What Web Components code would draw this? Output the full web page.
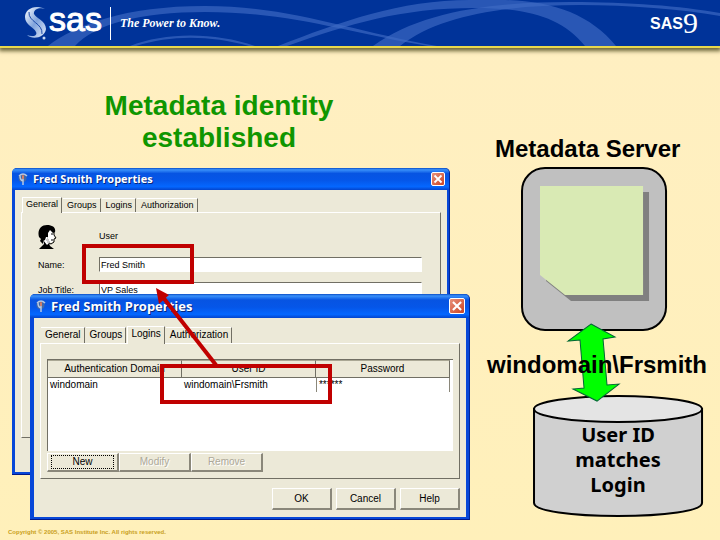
<!DOCTYPE html>
<html lang="en">
<head>
<meta charset="utf-8">
<title>Metadata identity established</title>
<style>
html, body { margin: 0; min-height: 100%; }
body { background: linear-gradient(#ffefc2, #fff0ba); font-family: "Liberation Sans", Arial, sans-serif; color: #000; }
</style>
</head>
<body>
<metadata-slide></metadata-slide>

<script>
const define = (name, html, setup) => {
  const tpl = document.createElement('template');
  tpl.innerHTML = html;
  customElements.define(name, class extends HTMLElement {
    constructor() {
      super();
      this.attachShadow({ mode: 'open' }).append(tpl.content.cloneNode(true));
    }
    connectedCallback() { if (setup) setup(this, this.shadowRoot); }
  });
};

define('slide-header', `
<style>
:host { display: flex; align-items: center; position: relative; height: 46px; background: #003399; border-bottom: 2px solid #e8d84c; box-shadow: 0 2px 4px 1px #6b6438; color: #fff; padding: 0 22px 0 24px; }
.arcs { position: absolute; inset: 0; width: 100%; height: 100%; }
.mark { position: relative; width: 25px; height: 34px; }
.sas { position: relative; font-size: 34px; line-height: 34px; -webkit-text-stroke: 1px #fff; padding-bottom: 8px; }
.rule { position: relative; width: 1px; height: 33px; background: #fff; margin: 0 9px 0 8px; }
.tag { position: relative; font: italic bold 12px/16px "Liberation Serif", "Times New Roman", serif; flex: 1; }
.prod { position: relative; font: bold 16px/20px "Liberation Sans Narrow", "Liberation Sans", sans-serif; padding-top: 2px; }
.nine { position: relative; font: 30px/30px "Liberation Serif", serif; }
</style>
<svg class="arcs" viewBox="0 0 720 46" preserveAspectRatio="none" fill="#3f6cc4" fill-opacity=".65" aria-hidden="true">
<path d="M48 46C75 25 125 6 205 6C290 6 350 31 437 46H428C345 32 290 12 205 12C140 12 95 24 75 46Z"/>
<path d="M278 46C340 22 400 0 470 0H500C550 0 590 14 616 46H585C562 18 530 8 475 8C400 8 350 24 287 46Z"/>
<path d="M373 46C420 12 490 2 570 2C630 2 680 6 720 13V16C680 9 630 5 580 5C510 5 440 14 400 46Z"/>
<path d="M130 46C165 32 215 32 255 46H249C210 35 170 35 136 46Z"/>
</svg>
<svg class="mark" viewBox="0 0 25 34" aria-hidden="true">
<defs><linearGradient id="g" x1="0" y1="0" x2="1" y2="1"><stop offset="0" stop-color="#fff"/><stop offset=".5" stop-color="#7fa3dc"/><stop offset="1" stop-color="#e3ecfa"/></linearGradient></defs>
<path fill="url(#g)" d="M21 3C11-2 1 3 1 11C1 19 10 21 12 26C14 30 8 31 3 29C8 34 21 32 22 23C22 15 12 12 10 8C9 4 15 1 21 3Z"/>
<path fill="none" stroke="#1c4aa8" stroke-width="1" d="M5 6C4 16 19 17 18 28"/>
<circle cx="20" cy="32" r="1.5" fill="#c7d8f3"/>
</svg>
<span class="sas">sas</span>
<span class="rule"></span>
<span class="tag">The Power to Know.</span>
<span class="prod">SAS</span><span class="nine">9</span>
`);

define('dialog-window', `
<style>
:host { display: flex; flex-direction: column; box-sizing: border-box; border-radius: 5px 5px 0 0; background: #0747d8; border-right: 1px solid #00259a; border-bottom: 1px solid #00188a; }
header { display: flex; align-items: center; gap: 5px; height: var(--bar, 22px); padding: 0 4px 0 6px; border-radius: 5px 5px 0 0; background: linear-gradient(#0a4cc4, #3a91fa 8%, #0754e2 25%, #0556e8 55%, #0467ff 85%, #0344cc); color: #fff; }
h2 { flex: 1; margin: 0; font: bold var(--title, 11px)/16px "Open Sans", "Noto Sans", sans-serif; text-shadow: 1px 1px 0 #07267a; white-space: nowrap; }
header svg.ico { width: 10px; height: 12px; }
button { display: flex; padding: 0; border: 1px solid #fff; border-radius: 2px; background: linear-gradient(135deg, #e8927c, #cc4322); width: var(--close, 14px); height: var(--close, 14px); box-sizing: border-box; align-items: center; justify-content: center; }
button svg { width: 100%; height: 100%; }
.body { flex: 1; display: flex; flex-direction: column; background: #ece9d8; margin: 0 var(--edge-right, 2px) 2px var(--edge, 3px); padding: var(--pad, 7px 6px 34px); }
</style>
<header>
<svg class="ico" viewBox="0 0 10 12" aria-hidden="true"><circle cx="4.5" cy="5" r="4" fill="#4068a8"/><path d="M1 3Q5-1 9 3M5 3V12M2 3Q2 7 5 8" stroke="#b8c8e0" stroke-width="1.5" fill="none"/><path d="M5 2V6" stroke="#e0704c" stroke-width="1.5"/></svg>
<h2></h2>
<button type="button" aria-label="Close"><svg viewBox="0 0 12 12"><path d="M2.500 2.500L9.500 9.500M9.500 2.500L2.500 9.500" stroke="#fff" stroke-width="1.800"/></svg></button>
</header>
<div class="body"><slot></slot></div>
`, (el, root) => { root.querySelector('h2').textContent = el.getAttribute('heading'); });

define('tab-strip', `
<style>
:host { display: flex; align-items: flex-end; gap: 1px; padding-left: 1px; }
button { font: var(--ui, 9px)/12px "Liberation Sans", Arial, sans-serif; margin: 0; padding: 0 3px 1px 4px; height: var(--tab, 14px); border: 0; border-top: 1px solid #fff; border-right: 1px solid #716f64; background: #ece9d8; color: #000; }
button.on { height: calc(var(--tab, 14px) + 2px); padding: 0 3px 3px; margin-bottom: -1px; position: relative; border-left: 1px solid #fff; }
</style>
`, (el, root) => {
  el.setAttribute('role', 'tablist');
  ['General', 'Groups', 'Logins', 'Authorization'].forEach(name => {
    const b = document.createElement('button');
    b.type = 'button';
    b.textContent = name;
    b.setAttribute('role', 'tab');
    b.setAttribute('aria-selected', name === el.getAttribute('selected'));
    if (name === el.getAttribute('selected')) b.className = 'on';
    root.append(b);
  });
});

define('tab-panel', `
<style>
:host { display: flex; flex-direction: column; flex: 1; border: 1px solid #fff; border-right: 1px solid #716f64; border-bottom: 1px solid #716f64; }
</style><slot></slot>
`);

define('user-form', `
<style>
:host { display: grid; grid-template-columns: 61px 1fr; align-items: center; padding: 12px 18px 0 16px; font-size: 9px; line-height: 12px; row-gap: 10px; }
svg { width: 20px; height: 24px; margin-bottom: -2px; }
input { box-sizing: border-box; width: 100%; height: 15px; border: 1px solid #716f64; border-right-color: #fff; border-bottom-color: #fff; border-radius: 0; padding: 0 0 0 1px; font: 9px/12px "Liberation Sans", Arial, sans-serif; background: #fff; color: #000; }
</style>
<svg viewBox="0 0 20 24" aria-hidden="true">
<path fill="#fff" d="M6 5H14L16 11L15 17L11 18L12 22H5Z"/>
<path d="M1 12C-1 5 3 0 9 0C15 0 18 3 17 7L15 8L12 5L10 8V12H8L7 15L5 16V19L2 16L3 14Z"/>
<path d="M16 6V10L18 13L16 14V17L13 19L11 18M13 9H15M13 15H15" fill="none" stroke="#000" stroke-width="1"/>
<path d="M5 15L6 19L3 22L1 24H16L12 21L11 18L9 20Z"/>
<path d="M8 15H11M9 17H12M9 13H10" stroke="#999" stroke-width="1"/>
</svg>
<span>User</span>
<label for="n">Name:</label><input id="n" value="Fred Smith">
<label for="j">Job Title:</label><input id="j" value="VP Sales">
`);

define('logins-panel', `
<style>
:host { display: block; padding: 15px 6px 6px 6px; font-size: 10px; line-height: 12px; }
.list { box-sizing: border-box; height: 92px; background: #fff; border-top: 1px solid #716f64; border-left: 1px solid #716f64; padding-right: 3px; }
table { width: 100%; table-layout: fixed; border-collapse: separate; border-spacing: 0; }
th { font-weight: normal; height: 16px; padding: 0; background: #ece9d8; border-top: 1px solid #aaa794; border-right: 1px solid #716f64; border-bottom: 1px solid #716f64; white-space: nowrap; }
td { height: 14px; padding: 0 0 0 2px; border-right: 1px solid #8a877a; white-space: nowrap; }
td:first-child, td:nth-child(2) { border-right: 0; }
td:last-child { border-left: 1px solid #8a877a; }
.row { display: flex; margin-top: 2px; }
button { flex: 0 0 72px; height: 19px; box-sizing: border-box; border: 1px solid #fff; border-right: 2px solid #8a877a; border-bottom: 2px solid #8a877a; background: #ece9d8; padding: 1px 2px; font: 10px/12px "Liberation Sans", Arial, sans-serif; color: #000; }
button:disabled { color: #aca899; text-shadow: 1px 1px 0 #fff; }
button span { display: block; border: 1px dotted #000; margin: 0 1px; }
</style>
<div class="list"><table>
<thead><tr><th>Authentication Domain</th><th>User ID</th><th>Password</th></tr></thead>
<tbody><tr><td>windomain</td><td>windomain\\Frsmith</td><td>******</td></tr></tbody>
</table></div>
<div class="row"><button type="button"><span>New</span></button><button type="button" disabled>Modify</button><button type="button" disabled>Remove</button></div>
`);

define('dialog-actions', `
<style>
:host { display: flex; justify-content: flex-end; gap: 4px; padding-top: 9px; }
button { width: 60px; height: 22px; border: 1px solid #fff; border-right: 2px solid #8a877a; border-bottom: 2px solid #8a877a; background: #ece9d8; font: 10px/12px "Liberation Sans", Arial, sans-serif; color: #000; padding: 0; }
</style>
<button type="button">OK</button><button type="button">Cancel</button><button type="button">Help</button>
`);

define('server-diagram', `
<style>
:host { display: block; padding-top: 45px; }
h2 { margin: 0; padding-left: 9px; font-size: 24px; line-height: 28px; white-space: nowrap; }
svg { display: block; width: 100%; height: auto; overflow: visible; }
text { text-anchor: middle; font-weight: bold; }
.login { font-size: 24px; }
.store { font-family: "Noto Sans", sans-serif; font-size: 20px; }
</style>
<h2>Metadata Server</h2>
<svg viewBox="0 0 222 356" role="img" aria-label="Metadata Server linked to the login store">
<rect x="36" y="5" width="144" height="162" rx="23" fill="#c0c0c0" stroke="#000" stroke-width="2"/>
<path d="M60 29H163V138H85L60 118Z" fill="#808080"/>
<path d="M54 23H157V132H79L54 112Z" fill="#d9eab4"/>
<path d="M48 246V340C48 348 86 353 132 353S216 348 216 340V246Z" fill="#d0d0d0" stroke="#000" stroke-width="2"/>
<ellipse cx="132" cy="246" rx="84" ry="13" fill="#e4e4e4" stroke="#000" stroke-width="2"/>
<path d="M105 161L129 174L117 176L121 222L133 221L111 238L87 226L98 225L94 177L82 178Z" fill="#00ff00" stroke="#063" stroke-width="1"/>
<text class="login" x="111" y="210">windomain\\Frsmith</text>
<text class="store" x="132" y="279">User ID</text>
<text class="store" x="132" y="304">matches</text>
<text class="store" x="132" y="329">Login</text>
</svg>
`);

define('window-stage', `
<style>
:host { display: grid; position: relative; }
.back { grid-area: 1 / 1; margin: 0 20px 45px 0; }
.front { grid-area: 1 / 1; position: relative; margin: 126px 0 0 18px; --bar: 24px; --title: 13px; --close: 16px; --edge: 4px; --edge-right: 3px; --pad: 8px 6px 7px; --ui: 10px; --tab: 16px; }
.marks { position: absolute; left: 0; top: 0; width: 330px; height: 240px; pointer-events: none; }
</style>
<dialog-window class="back" heading="Fred Smith Properties">
<tab-strip selected="General"></tab-strip>
<tab-panel><user-form></user-form></tab-panel>
</dialog-window>
<dialog-window class="front" heading="Fred Smith Properties">
<tab-strip selected="Logins"></tab-strip>
<tab-panel><logins-panel></logins-panel></tab-panel>
<dialog-actions></dialog-actions>
</dialog-window>
<svg class="marks" viewBox="0 0 330 240" fill="none" stroke="#c00000" stroke-width="4" aria-hidden="true">
<rect x="72" y="78" width="108" height="36"/>
<rect x="150" y="198" width="168" height="36"/>
<path d="M204 197L150 128"/>
<path d="M144 120L157 127L147 136Z" fill="#c00000" stroke="none"/>
</svg>
`);

define('metadata-slide', `
<style>
:host { display: block; }
main { display: grid; grid-template-columns: minmax(0, 33fr) minmax(0, 16fr); column-gap: 16px; padding: 42px 12px 0; }
h1 { margin: 0 auto 14px; max-width: 280px; padding-right: 44px; text-align: center; font-size: 28px; line-height: 32px; color: #0f9600; }
footer { padding: 8px; font-size: 6px; line-height: 8px; font-weight: bold; color: #c9a020; }
</style>
<slide-header></slide-header>
<main>
<section><h1>Metadata identity established</h1><window-stage></window-stage></section>
<server-diagram></server-diagram>
</main>
<footer>Copyright © 2005, SAS Institute Inc. All rights reserved.</footer>
`);
</script>
</body>
</html>
